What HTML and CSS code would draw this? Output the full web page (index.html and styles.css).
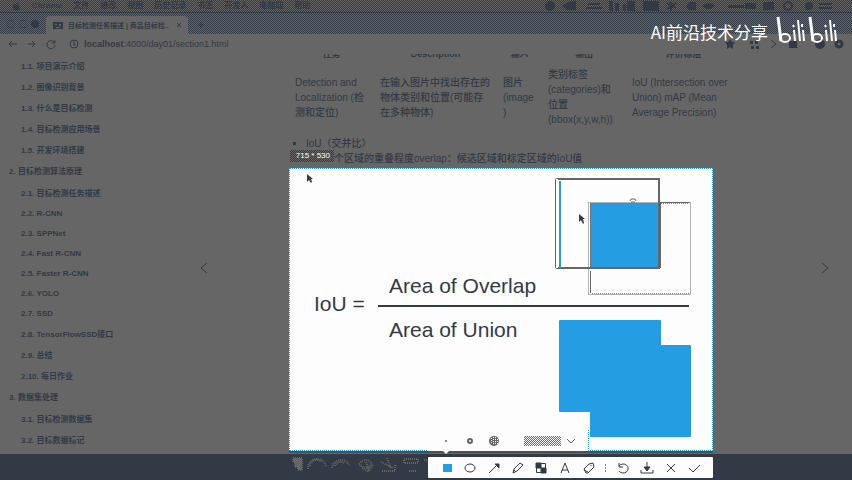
FILE: index.html
```html
<!DOCTYPE html>
<html lang="zh-CN">
<head>
<meta charset="utf-8">
<meta name="viewport" content="width=device-width, initial-scale=1">
<title>目标检测任务描述</title>
<link rel="stylesheet" href="styles.css">
</head>
<body>
<header class="menubar">
  <svg class="apple" viewBox="0 0 10 10" aria-hidden="true"><path d="M5 3C3 2 1 3 1 5.500C1 8 3 10 4 9.500H6C7.500 10 9 8 9 7C7.500 6 7.500 4 8.500 3.500C7.500 2.500 6 2.500 5 3ZM5 2.500C5 1 6 0 7 0C7 1.500 6 2.500 5 2.500Z"/></svg>
  <b>Chrome</b><span>文件</span><span>修改</span><span>视图</span><span>历史记录</span><span>书签</span><span>开发人</span><span>电脑端</span><span>帮助</span>
  <svg class="status" viewBox="0 0 300 12" aria-hidden="true">
    <circle cx="5" cy="6" r="5"/><path d="M17 6L23 2L31 1V10H22Z"/><path d="M43 3h12v2H43zM41 7h16v2H41z"/><path d="M64 1h4v10h-4zM70 3h4v8h-4zM78 4h3v7h-3zM82 1h8v10h-8zM98 1h16v10H98z"/><path d="M122 3l9 5M131 3l-9 6M126 2v9" class="line"/><path d="M144 2h7v8h-7l-3-4z"/><path d="M157 6q7-6 13 0l-4 3h-5zM183 5h16v3h-16zM200 3h11v6h-11zM218 2h11v8h-11z"/><circle cx="243" cy="6" r="4" class="line"/><circle cx="264" cy="6" r="4"/><path d="M274 3h13v2h-13zM274 7h13v2h-13z"/>
  </svg>
</header>
<div class="tabstrip">
  <div class="lights"><i></i><i></i><i class="full"></i></div>
  <div class="tab">
    <svg class="favicon" viewBox="0 0 10 7" aria-hidden="true"><path d="M0 0h10v7H0z"/><path d="M2 2h2v1H2zM6 2h2v2H6zM3 5h4v1H3z" class="hole"/></svg>
    <span>目标检测任务描述 | 商品目标检..</span>
    <button aria-label="关闭标签页"><svg viewBox="0 0 6 6"><path d="M1 1l4 4M5 1L1 5"/></svg></button>
  </div>
  <button class="plus" aria-label="新标签页"><svg viewBox="0 0 6 6"><path d="M3 0v6M0 3h6"/></svg></button>
</div>
<nav class="toolbar" aria-label="浏览器">
  <button aria-label="后退"><svg viewBox="0 0 10 10"><path d="M9 5H1M4 2L1 5L4 8"/></svg></button>
  <button aria-label="前进"><svg viewBox="0 0 10 10"><path d="M1 5h7M5 2l3 3l-3 3"/></svg></button>
  <button aria-label="重新加载"><svg viewBox="0 0 10 10"><path d="M8 3A4 4 0 1 0 9 6M9 1v3H6"/></svg></button>
  <svg class="info" viewBox="0 0 10 10" aria-hidden="true"><circle cx="5" cy="5" r="4"/><path d="M5 2v4h2"/></svg>
  <a class="url" href="#top"><b>localhost</b>:4000/day01/section1.html</a>
  <svg class="extensions" viewBox="0 0 122 14" aria-hidden="true"><path d="M8 2l2 3h3l-2 3v4l-3-2l-3 2V8L3 5h3z"/><path d="M28 4h3v3h-3zM33 3h3v4h-3zM29 9h3v3h-3zM34 9h3v3h-3z"/><path d="M49 3l5 4l-5 4" class="line"/><path d="M67 4h8v7h-8z"/><circle cx="98" cy="7" r="5"/><circle cx="117" cy="7" r="3" class="ring"/></svg>
</nav>
<main class="page" id="top">
  <nav class="summary" aria-label="目录">
    <ul>
      <li><a href="#top">1.1. 项目演示介绍</a></li>
      <li><a href="#top">1.2. 图像识别背景</a></li>
      <li><a href="#top">1.3. 什么是目标检测</a></li>
      <li><a href="#top">1.4. 目标检测应用场景</a></li>
      <li><a href="#top">1.5. 开发环境搭建</a></li>
      <li class="chapter"><a href="#top">2. 目标检测算法原理</a></li>
      <li><a href="#top">2.1. 目标检测任务描述</a></li>
      <li class="latin"><a href="#top">2.2. R-CNN</a></li>
      <li class="latin"><a href="#top">2.3. SPPNet</a></li>
      <li class="latin"><a href="#top">2.4. Fast R-CNN</a></li>
      <li class="latin"><a href="#top">2.5. Faster R-CNN</a></li>
      <li class="latin"><a href="#top">2.6. YOLO</a></li>
      <li class="latin"><a href="#top">2.7. SSD</a></li>
      <li><a href="#top">2.8. TensorFlowSSD接口</a></li>
      <li><a href="#top">2.9. 总结</a></li>
      <li><a href="#top">2.10. 每日作业</a></li>
      <li class="chapter"><a href="#top">3. 数据集处理</a></li>
      <li><a href="#top">3.1. 目标检测数据集</a></li>
      <li><a href="#top">3.2. 目标数据标记</a></li>
    </ul>
  </nav>
  <a class="turn" href="#top" aria-label="上一页"><svg viewBox="0 0 8 12"><path d="M7 1L1 6L7 11"/></svg></a>
  <article>
    <table>
      <thead><tr><th class="task">任务</th><th class="desc">Description</th><th class="in">输入</th><th class="out">输出</th><th>评价标准</th></tr></thead>
      <tbody><tr>
        <td>Detection and<br>Localization (检<br>测和定位)</td>
        <td>在输入图片中找出存在的<br>物体类别和位置(可能存<br>在多种物体)</td>
        <td>图片<br>(image<br>)</td>
        <td>类别标签<br>(categories)和<br>位置<br>(bbox(x,y,w,h))</td>
        <td>IoU (Intersection over<br>Union) mAP (Mean<br>Average Precision)</td>
      </tr></tbody>
    </table>
    <ul class="notes"><li>IoU（交并比）</li></ul>
    <p>个区域的重叠程度overlap：候选区域和标定区域的IoU值</p>
  </article>
  <a class="turn next" href="#top" aria-label="下一页"><svg viewBox="0 0 8 12"><path d="M1 1l6 5l-6 5"/></svg></a>
</main>
<footer class="dock">
  <svg viewBox="0 0 140 22" aria-hidden="true">
    <path d="M3 4h9v12H8V13H5V8H3z" class="solid"/><path d="M18 15a9 9 0 0 1 18-2M20 12a7 7 0 0 1 12-4"/><path d="M42 14a9 9 0 0 1 17-3M45 12a6 6 0 0 1 9-3"/><path d="M69 10q8-8 13 0l-4 4l-6-1zM76 8l3 8l4-5M72 14l7 4"/><path d="M91 8l12 6M97 4l4 10M92 17h13V11"/><path d="M114 5h14v4h-14zM119 17h7M134 6h5"/>
  </svg>
</footer>

<div class="size-label">715 * 530</div>
<section class="selection" aria-label="截图选区">
  <svg viewBox="0 0 424 283" role="img" aria-label="IoU">
    <g class="formula"><text x="25" y="143">IoU =</text><text x="100" y="125">Area of Overlap</text><text x="100" y="169">Area of Union</text></g>
    <path class="bar" d="M89 138H400"/>
    <rect class="thin" x="266.500" y="10.500" width="104" height="90" rx="1"/>
    <path class="gray" d="M269 10h102v2H269zM369 11h2v90H269v-2h100z"/>
    <path class="blue" d="M270 13h2v87h-2z"/>
    <path class="blue" d="M301 35h69v64h-69z"/>
    <path class="gray" d="M369 35h3v65h-2v1H301v-2h68z"/>
    <path class="dash" d="M299.500 34.500H401.500V126.500H299.500V34.500M301.500 36V100"/>
    <path class="gray" d="M301 103h1v22h-1zM371 34h30v1h-30z"/>
    <path class="bluedash" d="M303 125.500H400M372 35.500h28"/>
    <path class="thin" d="M341 33l1-2h4l1 2M342 34h4"/>
    <path class="blue" d="M271 152h100q1 0 1 1v24h29q1 0 1 1v90q0 1-1 1h-100v-25h-30q-1 0-1-1v-90q0-1 1-1z"/>
    <path class="pointer" d="M18 6v8l2-2l2 3l1-1l-1-3h2zM290 46v8l2-2l2 4l1-1l-1-4h2z"/>
  </svg>
</section>
<div class="brushes">
  <button aria-label="细"><svg viewBox="0 0 12 12"><circle cx="6" cy="6" r="1"/></svg></button>
  <button aria-label="中"><svg viewBox="0 0 12 12"><circle cx="6" cy="6" r="2" class="ring"/></svg></button>
  <button aria-label="粗"><svg viewBox="0 0 12 12"><circle cx="6" cy="6" r="5"/><path d="M3.500 3v6M5.500 2v8M7.500 2v8M9.500 4v5" class="dots"/></svg></button>
  <button class="swatch" aria-label="颜色"><i></i><svg viewBox="0 0 10 6"><path d="M1 1l4 4l4-4" class="line"/></svg></button>
</div>
<div class="tools" role="toolbar" aria-label="标注工具">
  <button aria-label="矩形"><svg viewBox="0 0 14 14"><path d="M3 3h9v8H3z" class="fill-blue"/></svg></button>
  <button aria-label="椭圆"><svg viewBox="0 0 14 14"><ellipse cx="7" cy="7" rx="5" ry="4"/></svg></button>
  <button aria-label="箭头"><svg viewBox="0 0 14 14"><path d="M2 12l7-7"/><path d="M8 3h4v4z" class="fill"/></svg></button>
  <button aria-label="画笔"><svg viewBox="0 0 14 14"><path d="M2 12l1-4l6-6l3 2l-6 6zM3 9l2 2"/></svg></button>
  <button aria-label="马赛克"><svg viewBox="0 0 14 14"><path d="M2.500 2.500h9v9h-9z"/><path d="M2 2h5v5H2zM7 7h5v5H7z" class="fill"/></svg></button>
  <button aria-label="文字"><svg viewBox="0 0 14 14"><path d="M3 12L7 2l4 10M4 9h6"/></svg></button>
  <button aria-label="橡皮"><svg viewBox="0 0 14 14"><path d="M2 8l5-5l4-1l1 4l-6 6h-2zM9 4v1M2 9l4 2"/></svg></button>
  <span class="separator"></span>
  <button aria-label="撤销"><svg viewBox="0 0 14 14"><path d="M3 2v4h4M3 5a5 4.500 0 1 1 0 5"/></svg></button>
  <button aria-label="保存"><svg viewBox="0 0 14 14"><path d="M1 9v3h12V9M7 1v6"/><path d="M4 6h6l-3 4z" class="fill"/></svg></button>
  <button aria-label="取消"><svg viewBox="0 0 14 14"><path d="M3 3l8 8M11 3l-8 8"/></svg></button>
  <button aria-label="完成"><svg viewBox="0 0 14 14"><path d="M2 7l4 4l7-7"/></svg></button>
</div>
<div class="watermark">
  <span>AI前沿技术分享</span>
  <svg viewBox="0 0 62 28" role="img" aria-label="bilibili">
    <g id="half"><path d="M3 1l3 24" class="stem"/><ellipse cx="10" cy="22" rx="5" ry="4"/><path d="M19 14l1 11M23 4l2 21M28 14l1 11M18 9l1 2M27 8v3"/></g>
    <use href="#half" x="32"/>
  </svg>
</div>
</body>
</html>
```
FILE: styles.css
```css
:root {
  --ink: #323a45;
  --gray: #666666;
  --white: #fdfdfd;
  --blue: #259de2;
  --checker: repeating-conic-gradient(var(--ink) 0 25%, var(--gray) 0 50%) 0 0 / 2px 2px;
}
* { box-sizing: border-box; }
body {
  margin: 0;
  min-height: 100vh;
  position: relative;
  display: flex;
  flex-direction: column;
  overflow: hidden;
  background: var(--gray);
  color: var(--ink);
  font-family: "Liberation Sans", "Noto Sans CJK SC", sans-serif;
  font-size: 8px;
}
button { padding: 0; border: 0; background: none; color: inherit; font: inherit; display: grid; place-items: center; }
a { color: inherit; text-decoration: none; }
ul { list-style: none; margin: 0; padding: 0; }
svg { display: block; fill: none; stroke: currentColor; }

.menubar {
  height: 13px;
  display: flex;
  align-items: center;
  gap: 11px;
  padding: 0 7px 0 12px;
  background: var(--checker);
  border-bottom: 1px solid var(--ink);
  line-height: 12px;
  white-space: nowrap;
  font-weight: bold;
}
.menubar svg { fill: var(--ink); stroke: none; flex: none; }
.menubar .line { fill: none; stroke: var(--ink); stroke-width: 2; }
.apple { width: 9px; height: 9px; }
.status { width: 300px; height: 12px; margin-left: auto; }

.tabstrip { height: 21px; display: flex; align-items: flex-end; background: var(--checker); }
.lights { width: 46px; height: 20px; display: flex; align-items: center; gap: 4px; padding-left: 7px; }
.lights i { width: 8px; height: 8px; border: 1px dotted var(--ink); border-radius: 4px; }
.lights .full { background: var(--ink); }
.tab {
  width: 142px;
  height: 18px;
  display: flex;
  align-items: center;
  gap: 5px;
  padding: 0 6px 0 7px;
  border-radius: 4px 4px 0 0;
  background: var(--gray);
  font-size: 7px;
  font-weight: bold;
  white-space: nowrap;
}
.tab button { margin-left: auto; }
.tab button svg, .plus svg { width: 6px; height: 6px; }
.favicon { width: 10px; height: 7px; fill: var(--ink); stroke: none; }
.favicon .hole { fill: var(--gray); }
.plus { height: 18px; margin-left: 10px; }

.toolbar {
  height: 20px;
  display: flex;
  align-items: center;
  gap: 9px;
  padding: 0 8px;
  background: linear-gradient(90deg, var(--gray) 0 24%, transparent 40% 76%, var(--gray)), repeating-conic-gradient(var(--ink) 0 4%, var(--gray) 0 100%) 0 0 / 4px 4px;
}
.toolbar svg { width: 10px; height: 10px; }
.info { margin-left: 4px; }
.url { margin-left: -4px; font-size: 9px; }
.toolbar .extensions { width: 122px; height: 14px; margin-left: auto; fill: var(--ink); stroke: none; }
.extensions .line { fill: none; stroke: var(--ink); }
.toolbar .extensions .ring { fill: none; stroke: var(--ink); stroke-width: 3; }

.page { flex: 1; display: flex; min-height: 0; overflow: hidden; }
.summary { width: 200px; padding-top: 2px; font-weight: bold; }
.summary li { padding-left: 21px; line-height: 21px; white-space: nowrap; }
.summary .latin { line-height: 20px; }
.summary .chapter { padding-left: 9px; line-height: 22px; }
.turn { align-self: center; margin-top: 28px; width: 89px; }
.turn svg { width: 8px; height: 12px; }
.next { width: 31px; margin-left: auto; }
article { width: 452px; font-size: 10px; font-weight: 500; line-height: 15px; white-space: nowrap; }
table { width: 452px; table-layout: fixed; border-collapse: collapse; margin-top: -7px; }
th { height: 14px; padding: 0; font-size: 9px; line-height: 14px; }
td { height: 72px; padding: 0 6px; vertical-align: middle; }
.task { width: 85px; }
.desc { width: 123px; }
.in { width: 45px; }
.out { width: 84px; }
.notes { padding: 3px 0 0 17px; list-style: square; }
article p { margin: 0; padding-left: 45px; }

.dock { height: 26px; padding-left: 290px; background: var(--ink); color: var(--gray); }
.dock svg { width: 140px; height: 22px; stroke-width: 2; stroke-dasharray: 1 1; }
.dock .solid { fill: var(--gray); }

.size-label {
  position: absolute;
  left: 290px;
  top: 150px;
  width: 44px;
  height: 12px;
  background: var(--checker);
  color: var(--white);
  font-size: 8px;
  line-height: 12px;
  text-align: right;
  padding-right: 4px;
}
.selection {
  position: absolute;
  left: 289px;
  top: 168px;
  width: 424px;
  height: 283px;
  background: var(--white);
  outline: 1px dotted var(--blue);
  outline-offset: -1px;
  box-shadow: 0 2px 0 #4c5056;
}
.selection svg { width: 100%; height: 100%; }
.formula { fill: var(--ink); stroke: none; font-size: 21px; }
.bar { stroke: var(--ink); stroke-width: 2; }
.thin { stroke: var(--gray); }
.gray { fill: var(--gray); stroke: none; }
.blue { fill: var(--blue); stroke: none; }
.dash { stroke: var(--gray); stroke-dasharray: 1 1; }
.bluedash { stroke: var(--blue); stroke-dasharray: 1 1; }
.pointer { fill: var(--ink); stroke: none; }

.brushes {
  position: absolute;
  left: 428px;
  top: 430px;
  width: 161px;
  height: 21px;
  display: flex;
  align-items: center;
  gap: 12px;
  padding: 0 12px;
  background: var(--white);
  border-right: 1px dotted var(--blue);
  color: var(--gray);
}
.brushes::after {
  content: "";
  position: absolute;
  left: 15px;
  top: 21px;
  border: 3px solid transparent;
  border-top-color: var(--white);
}
.brushes svg { width: 12px; height: 12px; fill: currentColor; stroke: none; }
.brushes .ring, .brushes .line { fill: none; stroke: currentColor; }
.brushes .ring { stroke-width: 2; }
.brushes .dots { stroke: var(--white); stroke-dasharray: 1 1; }
.swatch { display: flex; align-items: center; gap: 5px; margin-left: auto; }
.swatch i { width: 37px; height: 10px; background: repeating-conic-gradient(var(--gray) 0 25%, var(--white) 0 50%) 0 0 / 2px 2px; }
.brushes .swatch svg { width: 10px; height: 6px; }

.tools {
  position: absolute;
  left: 428px;
  top: 457px;
  width: 285px;
  height: 21px;
  display: flex;
  align-items: center;
  padding: 0 7px;
  border-radius: 1px;
  background: var(--white);
}
.tools button { flex: 1; }
.tools svg { width: 14px; height: 14px; }
.tools .fill { fill: var(--ink); }
.tools .fill-blue { fill: var(--blue); stroke: none; }
.separator { width: 11px; height: 8px; background: repeating-linear-gradient(var(--blue) 0 2px, var(--white) 2px 3px) center / 1px 100% no-repeat; }

.watermark {
  position: absolute;
  right: 15px;
  top: 16px;
  display: flex;
  align-items: center;
  gap: 7px;
  color: var(--white);
  font-family: "Noto Sans CJK SC", sans-serif;
  font-size: 17px;
  line-height: 32px;
}
.watermark svg { width: 62px; height: 28px; stroke-width: 2; margin-bottom: 4px; }
.watermark .stem { stroke-width: 3; }
```
